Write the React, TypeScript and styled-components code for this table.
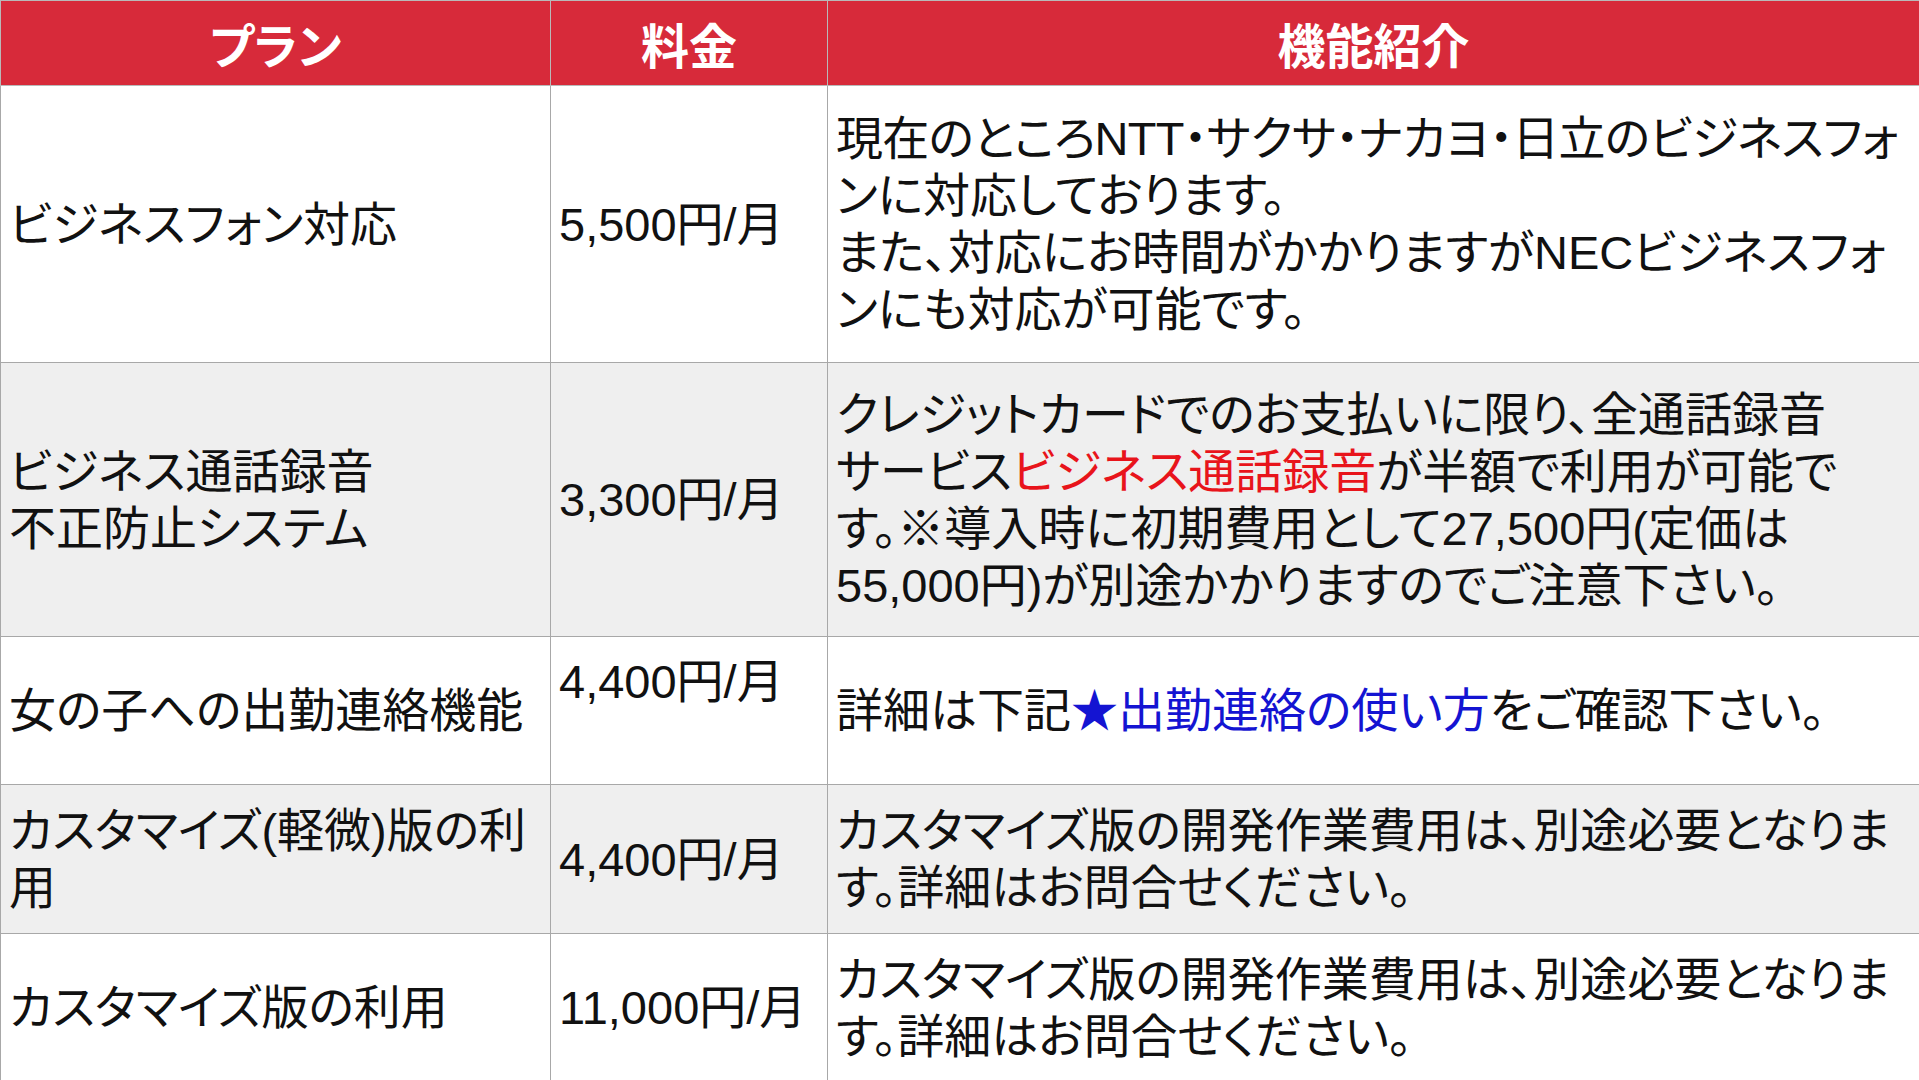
import React from 'react';
import styled, { createGlobalStyle } from 'styled-components';

const GlobalStyle = createGlobalStyle`
  html, body {
    margin: 0;
    padding: 0;
    background: #ffffff;
  }
  body {
    font-family: "Liberation Sans", "Noto Sans CJK JP", sans-serif;
    color: #111111;
  }
`;

const Table = styled.table`
  width: 1919px;
  border-collapse: collapse;
  table-layout: fixed;
  font-family: "Liberation Sans", "Noto Sans CJK JP", sans-serif;
  font-feature-settings: "palt";
`;

const HeadCell = styled.th`
  height: 84px;
  padding: 0;
  background: #d72a3a;
  color: #ffffff;
  font-size: 48px;
  font-weight: 700;
  text-align: center;
  vertical-align: middle;
  border: 1px solid #b9b9b9;
`;

const Row = styled.tr<{ $shade?: boolean; $height: number }>`
  height: ${(p) => p.$height}px;
  background: ${(p) => (p.$shade ? '#efefef' : '#ffffff')};
`;

const Cell = styled.td<{ $top?: boolean }>`
  padding: ${(p) => (p.$top ? '16px' : '0')} 4px 0 8px;
  font-size: 47px;
  line-height: 57px;
  color: #111111;
  white-space: nowrap;
  vertical-align: ${(p) => (p.$top ? 'top' : 'middle')};
  border: 1px solid #a8a8a8;
`;

const Snug = styled.span`
  letter-spacing: -0.7px;
`;

const Red = styled.span`
  color: #e8141b;
`;

const Blue = styled.span`
  color: #1414d2;
`;

const lines = (parts: React.ReactNode[]) =>
  parts.map((part, i) => (
    <React.Fragment key={i}>
      {i > 0 && <br />}
      {part}
    </React.Fragment>
  ));

interface Plan {
  name: React.ReactNode[];
  price: string;
  priceTop?: boolean;
  detail: React.ReactNode[];
  height: number;
}

const plans: Plan[] = [
  {
    name: ['ビジネスフォン対応'],
    price: '5,500円/月',
    height: 277,
    detail: [
      <Snug>現在のところNTT・サクサ・ナカヨ・日立のビジネスフォ</Snug>,
      'ンに対応しております。',
      'また、対応にお時間がかかりますがNECビジネスフォ',
      'ンにも対応が可能です。',
    ],
  },
  {
    name: ['ビジネス通話録音', '不正防止システム'],
    price: '3,300円/月',
    height: 274,
    detail: [
      'クレジットカードでのお支払いに限り、全通話録音',
      <>
        サービス<Red>ビジネス通話録音</Red>が半額で利用が可能で
      </>,
      'す。※導入時に初期費用として27,500円(定価は',
      '55,000円)が別途かかりますのでご注意下さい。',
    ],
  },
  {
    name: ['女の子への出勤連絡機能'],
    price: '4,400円/月',
    priceTop: true,
    height: 148,
    detail: [
      <>
        詳細は下記<Blue>★出勤連絡の使い方</Blue>をご確認下さい。
      </>,
    ],
  },
  {
    name: ['カスタマイズ(軽微)版の利', '用'],
    price: '4,400円/月',
    height: 149,
    detail: ['カスタマイズ版の開発作業費用は、別途必要となりま', 'す。詳細はお問合せください。'],
  },
  {
    name: ['カスタマイズ版の利用'],
    price: '11,000円/月',
    height: 148,
    detail: ['カスタマイズ版の開発作業費用は、別途必要となりま', 'す。詳細はお問合せください。'],
  },
];

const App: React.FC = () => {
  return (
    <>
      <GlobalStyle />
      <Table>
        <colgroup>
          <col style={{ width: 550 }} />
          <col style={{ width: 277 }} />
          <col style={{ width: 1092 }} />
        </colgroup>
        <thead>
          <tr>
            <HeadCell>プラン</HeadCell>
            <HeadCell>料金</HeadCell>
            <HeadCell>機能紹介</HeadCell>
          </tr>
        </thead>
        <tbody>
          {plans.map((plan, index) => (
            <Row key={index} $shade={index % 2 === 1} $height={plan.height}>
              <Cell>{lines(plan.name)}</Cell>
              <Cell $top={plan.priceTop}>{plan.price}</Cell>
              <Cell>{lines(plan.detail)}</Cell>
            </Row>
          ))}
        </tbody>
      </Table>
    </>
  );
};

export default App;
